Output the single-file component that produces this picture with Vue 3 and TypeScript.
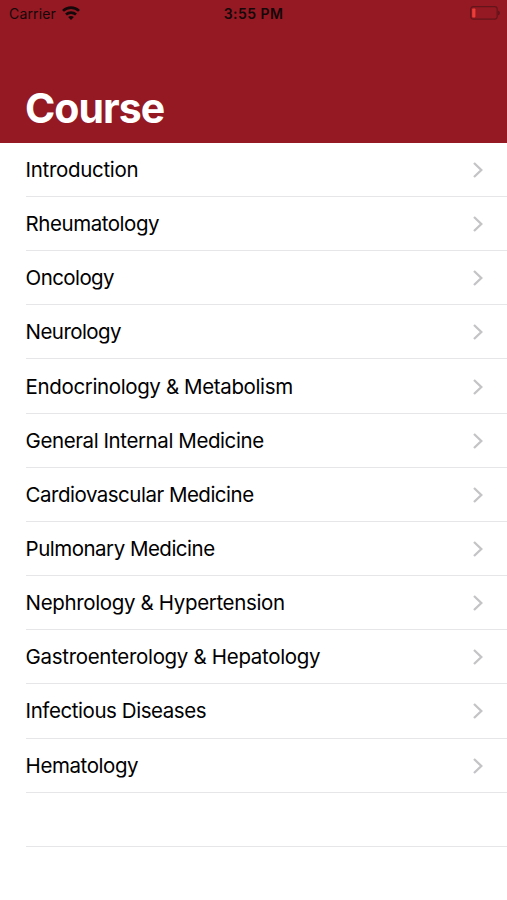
<script setup lang="ts">
interface Course { title: string; width: number }
const courses: Course[] = [
  { title: 'Introduction', width: 113 },
  { title: 'Rheumatology', width: 134 },
  { title: 'Oncology', width: 89 },
  { title: 'Neurology', width: 96 },
  { title: 'Endocrinology & Metabolism', width: 267.5 },
  { title: 'General Internal Medicine', width: 238.5 },
  { title: 'Cardiovascular Medicine', width: 228.5 },
  { title: 'Pulmonary Medicine', width: 189.5 },
  { title: 'Nephrology & Hypertension', width: 259.5 },
  { title: 'Gastroenterology & Hepatology', width: 295 },
  { title: 'Infectious Diseases', width: 181 },
  { title: 'Hematology', width: 113 },
]
</script>

<template>
  <main class="screen">
    <header class="header">
      <div class="status">
        <div class="carrier">
          <span>Carrier</span>
          <svg class="wifi" viewBox="0 0 18 14" fill="none" stroke="#14080a" stroke-width="2.7">
            <path d="M1 4.9C5.5.5 12.5.5 17 4.9M4 8.6C6.8 6 11.2 6 14 8.6" />
            <path d="M9 14 6.1 11Q9 8.8 11.9 11Z" fill="#14080a" stroke="none" />
          </svg>
        </div>
        <span class="time">3:55 PM</span>
        <svg class="battery" viewBox="0 0 30 14">
          <rect x=".7" y=".7" width="26.5" height="12.4" rx="2.5" fill="none" stroke="#63151b" stroke-width="1.2" />
          <rect x="2.2" y="2.5" width="3.2" height="9" rx=".8" fill="#ee3d38" />
          <path d="M28 4.5Q30 5.4 30 7T28 9.5Z" fill="#63151b" />
        </svg>
      </div>
      <h1>Course</h1>
    </header>
    <ul class="list">
      <li v-for="course in courses" :key="course.title">
        <svg class="label" height="30" width="330"><text x="-.4" y="22.2" :textLength="course.width" lengthAdjust="spacing">{{ course.title }}</text></svg>
        <svg class="chevron" viewBox="0 0 12 18"><path d="m2 2 7.3 7L2 16" /></svg>
      </li>
      <li class="empty"></li>
    </ul>
  </main>
</template>

<style>
body { background: #fff; }
</style>
<style scoped>
.screen { width: 507px; height: 900px; overflow: hidden; background: #fff; font-family: Inter, sans-serif; color: #000; }
.header { box-sizing: border-box; height: 142.5px; background: #951922; }
.status { display: grid; grid-template-columns: 1fr auto 1fr; align-items: center; height: 27px; padding: 0 7px 0 9px; font-size: 14px; color: #14080a; }
.carrier { display: flex; align-items: center; gap: 6px; letter-spacing: .15px; }
.wifi { width: 18px; height: 14px; margin-top: -1px; }
.time { font-weight: 600; letter-spacing: .45px; margin-right: 2px; }
.battery { width: 30px; height: 14px; justify-self: end; margin-top: -1px; }
h1 { margin: 56px 0 0 25px; font-size: 41px; line-height: 51px; letter-spacing: -1px; font-weight: 700; color: #fff; }
.list { list-style: none; margin: 0; padding: .3px 0 0 26px; }
li { box-sizing: border-box; height: 54.17px; display: flex; align-items: center; justify-content: space-between; padding: 1px 23px 0 0; border-bottom: 1px solid #e6e6e8; }
.label { overflow: visible; font-size: 20.5px; }
.chevron { width: 12px; height: 18px; fill: none; stroke: #c4c4c7; stroke-width: 2.3; }
</style>
